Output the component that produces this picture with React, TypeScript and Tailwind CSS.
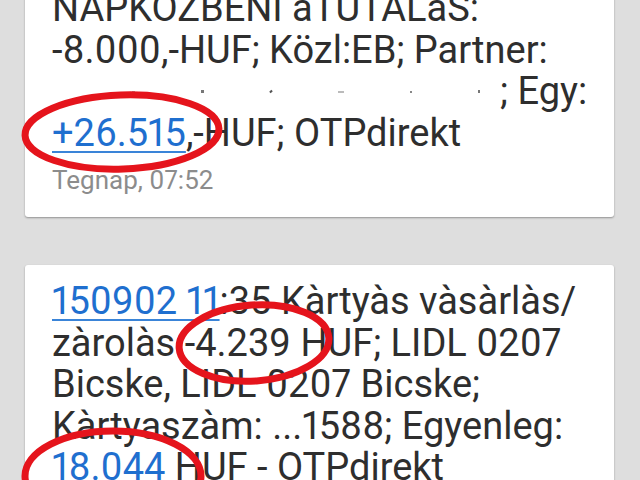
import React from "react";

const line = "block whitespace-nowrap h-[41.5px] leading-[41.5px]";
const link = "text-[#1f6fcf] underline decoration-[1.5px] underline-offset-[5px] decoration-[#3a84d8]";

export default function App() {
  return (
    <div className="relative w-[640px] h-[480px] overflow-hidden bg-[#dedede] font-['Roboto',sans-serif] proportional-nums">
      <div className="flex flex-col gap-[48px]">
        <div className="ml-[25px] w-[589px] -mt-[25px] rounded-[3px] bg-white pl-[27px] pt-[13px] pb-[22px] shadow-[0_1px_2px_rgba(0,0,0,0.35)] text-[38px] text-[#2e2e2e]">
          <span className={line}>NAPKÖZBENI aTUTALaS:</span>
          <span className={line}>-8.000,-HUF; Közl:EB; Partner:</span>
          <span className="flex items-center whitespace-nowrap h-[41.5px] leading-[41.5px]">
            <span className="flex w-[448px] items-center justify-between pl-[80px] pr-[20px]">
              <span className="h-[2px] w-[3px] bg-[#aaa]" />
              <span className="h-[3px] w-[3px] bg-[#777]" />
              <span className="h-[3px] w-[2px] rotate-45 bg-[#555]" />
              <span className="h-[2px] w-[6px] bg-[#bbb]" />
              <span className="h-[2px] w-[2px] bg-[#888]" />
              <span className="h-[3px] w-[2px] bg-[#777]" />
            </span>
            <span>; Egy:</span>
          </span>
          <span className={line}>
            <span className={link}>+26.515</span>,-HUF; OTPdirekt
          </span>
          <span className="block mt-[11px] h-[30px] leading-[30px] text-[26px] text-[#8c8c8c]">Tegnap, 07:52</span>
        </div>
        <div className="ml-[25px] w-[589px] rounded-[3px] bg-white pl-[27px] pt-[16px] pb-[22px] shadow-[0_1px_2px_rgba(0,0,0,0.35)] text-[38px] text-[#2e2e2e]">
          <span className={line}>
            <span className={link}>150902 11</span>:35 Kàrtyàs vàsàrlàs/
          </span>
          <span className={line}>zàrolàs -4.239 HUF; LIDL 0207</span>
          <span className={line}>Bicske, LIDL 0207 Bicske;</span>
          <span className={line}>Kàrtyaszàm: ...1588; Egyenleg:</span>
          <span className={line}>
            <span className="text-[#1f6fcf]">18.044</span> HUF - OTPdirekt
          </span>
        </div>
      </div>
      <svg className="pointer-events-none absolute left-0 top-0" width="640" height="480" viewBox="0 0 640 480">
        <g fill="none" stroke="#e5141c" strokeWidth="7">
          <ellipse cx="122" cy="132" rx="97" ry="37" transform="rotate(-2 122 132)" />
          <ellipse cx="254" cy="343" rx="75" ry="38" transform="rotate(-4 254 343)" />
          <ellipse cx="113" cy="476" rx="88" ry="45" />
        </g>
      </svg>
    </div>
  );
}
